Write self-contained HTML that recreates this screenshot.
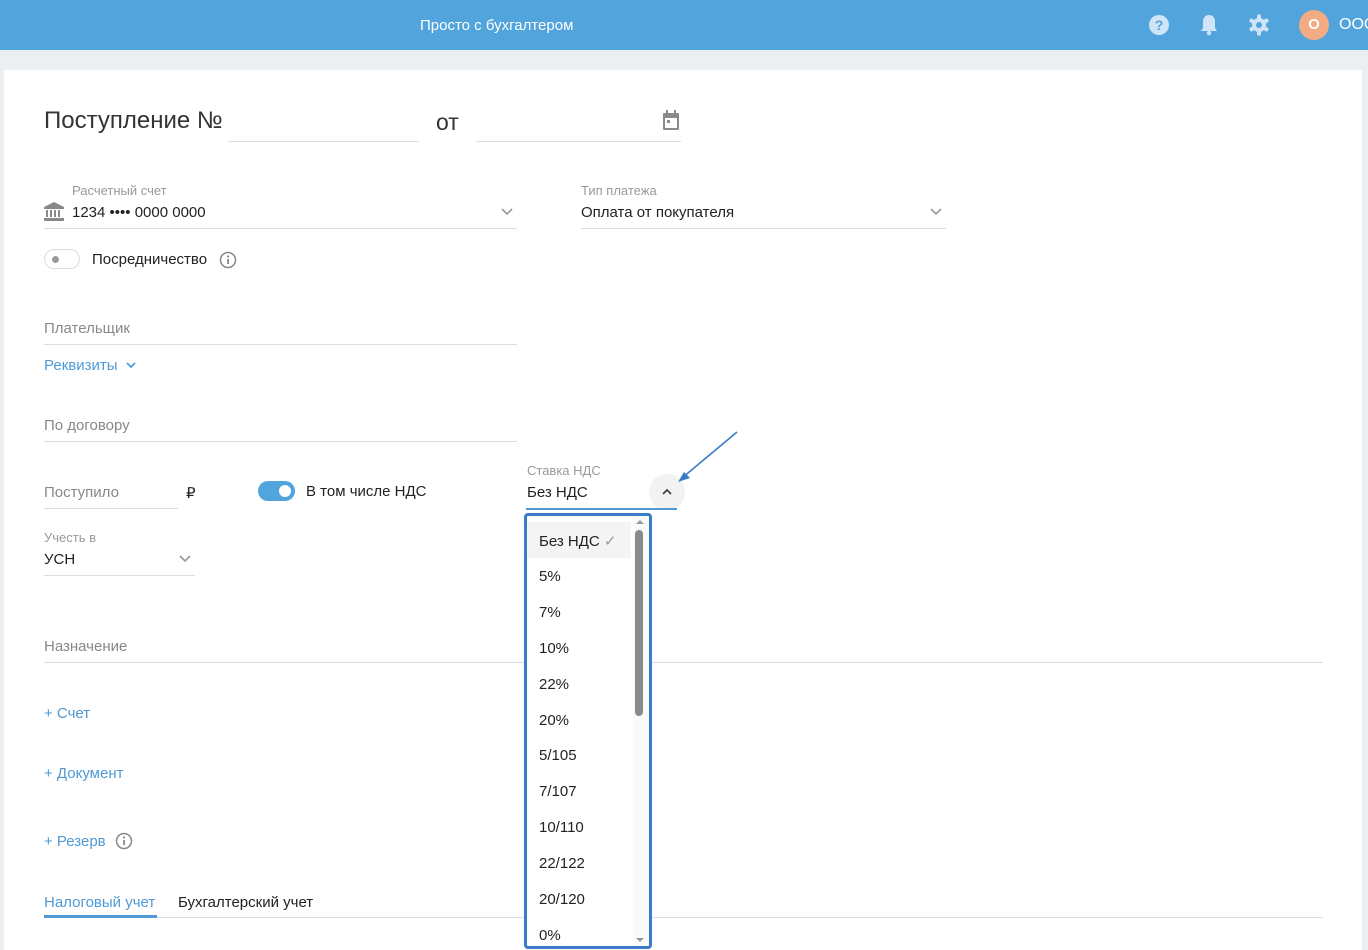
<!DOCTYPE html>
<html><head><meta charset="utf-8"><style>
*{box-sizing:border-box;margin:0;padding:0}
body{width:1368px;height:950px;overflow:hidden;background:#eceff2;font-family:"Liberation Sans",sans-serif;color:#222;position:relative}
.top{position:absolute;left:0;top:0;width:1368px;height:50px;background:#52a4dc}
.a{position:absolute}
.lbl{font-size:13px;color:#999;margin-top:1px}
.t{font-size:15px;color:#222;margin-top:1px}
.ph{font-size:15px;color:#888;margin-top:1px}
.ln{position:absolute;height:1px;background:#ddd}
.link{color:#4f9ad6;font-size:15px;margin-top:1px}
.card{position:absolute;left:4px;top:70px;width:1358px;height:880px;background:#fff}
.dd{position:absolute;left:524px;top:513px;width:128px;height:436px;border:3px solid #3b7cc7;border-radius:4px;background:#fff;overflow:hidden}
.it{position:absolute;left:12px;font-size:15px;color:#222;margin-top:1px}
</style></head><body>
<div class="top"></div>
<div class="a" style="left:420px;top:17px;color:#fff;font-size:15px">Просто с бухгалтером</div>
<svg class="a" style="left:1148px;top:14px" width="22" height="22"><circle cx="11" cy="11" r="10" fill="#cfe5f7"/><text x="11" y="16" text-anchor="middle" font-size="14" font-weight="bold" fill="#52a4dc" font-family="Liberation Sans">?</text></svg>
<svg class="a" style="left:1199px;top:13px" width="20" height="24"><path d="M10 2c-4 0-6 3-6 7v6l-2 3h16l-2-3V9c0-4-2-7-6-7z" fill="#cfe5f7"/><circle cx="10" cy="20" r="2.2" fill="#cfe5f7"/></svg>
<svg class="a" style="left:1248px;top:14px" width="22" height="22" viewBox="0 0 22 22"><g fill="#cfe5f7"><circle cx="11" cy="11" r="7"/><rect x="9" y="0.5" width="4" height="21" rx="1"/><rect x="9" y="0.5" width="4" height="21" rx="1" transform="rotate(60 11 11)"/><rect x="9" y="0.5" width="4" height="21" rx="1" transform="rotate(120 11 11)"/></g><circle cx="11" cy="11" r="3" fill="#52a4dc"/></svg>
<div class="a" style="left:1299px;top:10px;width:30px;height:30px;border-radius:50%;background:#f2ab83;color:#fff;font-weight:bold;font-size:15px;text-align:center;line-height:30px">О</div>
<div class="a" style="left:1339px;top:16px;color:#fff;font-size:16px">ООО</div>
<div class="card"></div>

<div class="a" style="left:44px;top:107px;font-size:24px;color:#333">Поступление №</div>
<div class="ln" style="left:228px;top:141px;width:191px"></div>
<div class="a" style="left:436px;top:109px;font-size:23px;color:#333">от</div>
<div class="ln" style="left:476px;top:141px;width:205px"></div>
<svg class="a" style="left:662px;top:110px" width="18" height="22"><rect x="1" y="3" width="16" height="17" rx="1" fill="#8a8a8a"/><rect x="3" y="8" width="12" height="10" fill="#fff"/><rect x="4" y="0" width="2" height="4" fill="#8a8a8a"/><rect x="12" y="0" width="2" height="4" fill="#8a8a8a"/><rect x="5" y="10" width="3" height="3" fill="#8a8a8a"/></svg>

<div class="a lbl" style="left:72px;top:182px">Расчетный счет</div>
<svg class="a" style="left:44px;top:202px" width="20" height="19"><path d="M10 0L0 5v2h20V5z" fill="#888"/><rect x="2" y="8" width="2" height="7" fill="#888"/><rect x="6" y="8" width="2" height="7" fill="#888"/><rect x="10" y="8" width="2" height="7" fill="#888"/><rect x="14" y="8" width="2" height="7" fill="#888"/><rect x="0" y="16" width="20" height="3" fill="#888"/></svg>
<div class="a t" style="left:72px;top:203px">1234 •••• 0000 0000</div>
<svg class="a" style="left:501px;top:208px" width="12" height="8"><path d="M1 1l5 5 5-5" stroke="#999" stroke-width="1.6" fill="none"/></svg>
<div class="ln" style="left:44px;top:228px;width:473px"></div>

<div class="a lbl" style="left:581px;top:182px">Тип платежа</div>
<div class="a t" style="left:581px;top:203px">Оплата от покупателя</div>
<svg class="a" style="left:930px;top:208px" width="12" height="8"><path d="M1 1l5 5 5-5" stroke="#999" stroke-width="1.6" fill="none"/></svg>
<div class="ln" style="left:581px;top:228px;width:365px"></div>

<div class="a" style="left:44px;top:249px;width:36px;height:20px;border:1px solid #ddd;border-radius:10px"><div style="position:absolute;left:7px;top:6px;width:7px;height:7px;border-radius:50%;background:#999"></div></div>
<div class="a t" style="left:92px;top:250px">Посредничество</div>
<svg class="a" style="left:219px;top:251px" width="18" height="18"><circle cx="9" cy="9" r="7.5" stroke="#888" stroke-width="1.5" fill="none"/><rect x="8.2" y="8" width="1.8" height="5" fill="#888"/><circle cx="9.1" cy="5.5" r="1.1" fill="#888"/></svg>

<div class="a ph" style="left:44px;top:319px">Плательщик</div>
<div class="ln" style="left:44px;top:344px;width:473px"></div>
<div class="a link" style="left:44px;top:356px">Реквизиты</div>
<svg class="a" style="left:126px;top:362px" width="10" height="7"><path d="M1 1l4 4 4-4" stroke="#4f9ad6" stroke-width="1.8" fill="none"/></svg>

<div class="a ph" style="left:44px;top:416px">По договору</div>
<div class="ln" style="left:44px;top:441px;width:473px"></div>

<div class="a ph" style="left:44px;top:483px">Поступило</div>
<div class="ln" style="left:44px;top:508px;width:134px"></div>
<div class="a t" style="left:186px;top:483px">₽</div>
<div class="a" style="left:258px;top:481px;width:37px;height:20px;border-radius:10px;background:#52a4dc"><div style="position:absolute;right:4px;top:4px;width:12px;height:12px;border-radius:50%;background:#fff"></div></div>
<div class="a t" style="left:306px;top:482px">В том числе НДС</div>

<div class="a lbl" style="left:527px;top:462px">Ставка НДС</div>
<div class="a t" style="left:527px;top:483px">Без НДС</div>
<div class="a" style="left:649px;top:474px;width:36px;height:36px;border-radius:50%;background:#f2f2f2"></div>
<svg class="a" style="left:662px;top:488px" width="10" height="7"><path d="M1 6l4-4 4 4" stroke="#444" stroke-width="1.8" fill="none"/></svg>
<div class="a" style="left:526px;top:508px;width:151px;height:2px;background:#4f9ad6"></div>
<svg class="a" style="left:672px;top:430px" width="70" height="56"><path d="M65 2L10 48" stroke="#3b7cc7" stroke-width="1.6"/><path d="M6 52l12-4-6-6z" fill="#3b7cc7"/></svg>

<div class="a lbl" style="left:44px;top:529px">Учесть в</div>
<div class="a t" style="left:44px;top:550px">УСН</div>
<svg class="a" style="left:179px;top:555px" width="12" height="8"><path d="M1 1l5 5 5-5" stroke="#999" stroke-width="1.6" fill="none"/></svg>
<div class="ln" style="left:44px;top:575px;width:151px"></div>

<div class="a ph" style="left:44px;top:637px">Назначение</div>
<div class="ln" style="left:44px;top:662px;width:1279px"></div>

<div class="a link" style="left:44px;top:704px">+ Счет</div>
<div class="a link" style="left:44px;top:764px">+ Документ</div>
<div class="a link" style="left:44px;top:832px">+ Резерв</div>
<svg class="a" style="left:115px;top:832px" width="18" height="18"><circle cx="9" cy="9" r="7.5" stroke="#888" stroke-width="1.5" fill="none"/><rect x="8.2" y="8" width="1.8" height="5" fill="#888"/><circle cx="9.1" cy="5.5" r="1.1" fill="#888"/></svg>

<div class="a link" style="left:44px;top:893px">Налоговый учет</div>
<div class="a t" style="left:178px;top:893px">Бухгалтерский учет</div>
<div class="ln" style="left:44px;top:917px;width:1279px"></div>
<div class="a" style="left:44px;top:915px;width:113px;height:3px;background:#4f9ad6"></div>

<div class="dd">
<div class="a" style="left:0;top:6px;width:104px;height:36px;background:#f4f4f4"></div>
<div class="it" style="top:15px">Без НДС <span style="color:#999">✓</span></div>
<div class="it" style="top:51px">5%</div>
<div class="it" style="top:87px">7%</div>
<div class="it" style="top:123px">10%</div>
<div class="it" style="top:159px">22%</div>
<div class="it" style="top:195px">20%</div>
<div class="it" style="top:230px">5/105</div>
<div class="it" style="top:266px">7/107</div>
<div class="it" style="top:302px">10/110</div>
<div class="it" style="top:338px">22/122</div>
<div class="it" style="top:374px">20/120</div>
<div class="it" style="top:410px">0%</div>
<div class="a" style="left:106px;top:0;width:16px;height:436px;background:#fafafa"></div>
<svg class="a" style="left:107px;top:2px" width="12" height="8"><path d="M2 6l4-4 4 4z" fill="#999"/></svg>
<div class="a" style="left:108px;top:14px;width:8px;height:186px;border-radius:4px;background:#8a8a8a"></div>
<svg class="a" style="left:107px;top:420px" width="12" height="8"><path d="M2 2l4 4 4-4z" fill="#999"/></svg>
</div>
</body></html>
